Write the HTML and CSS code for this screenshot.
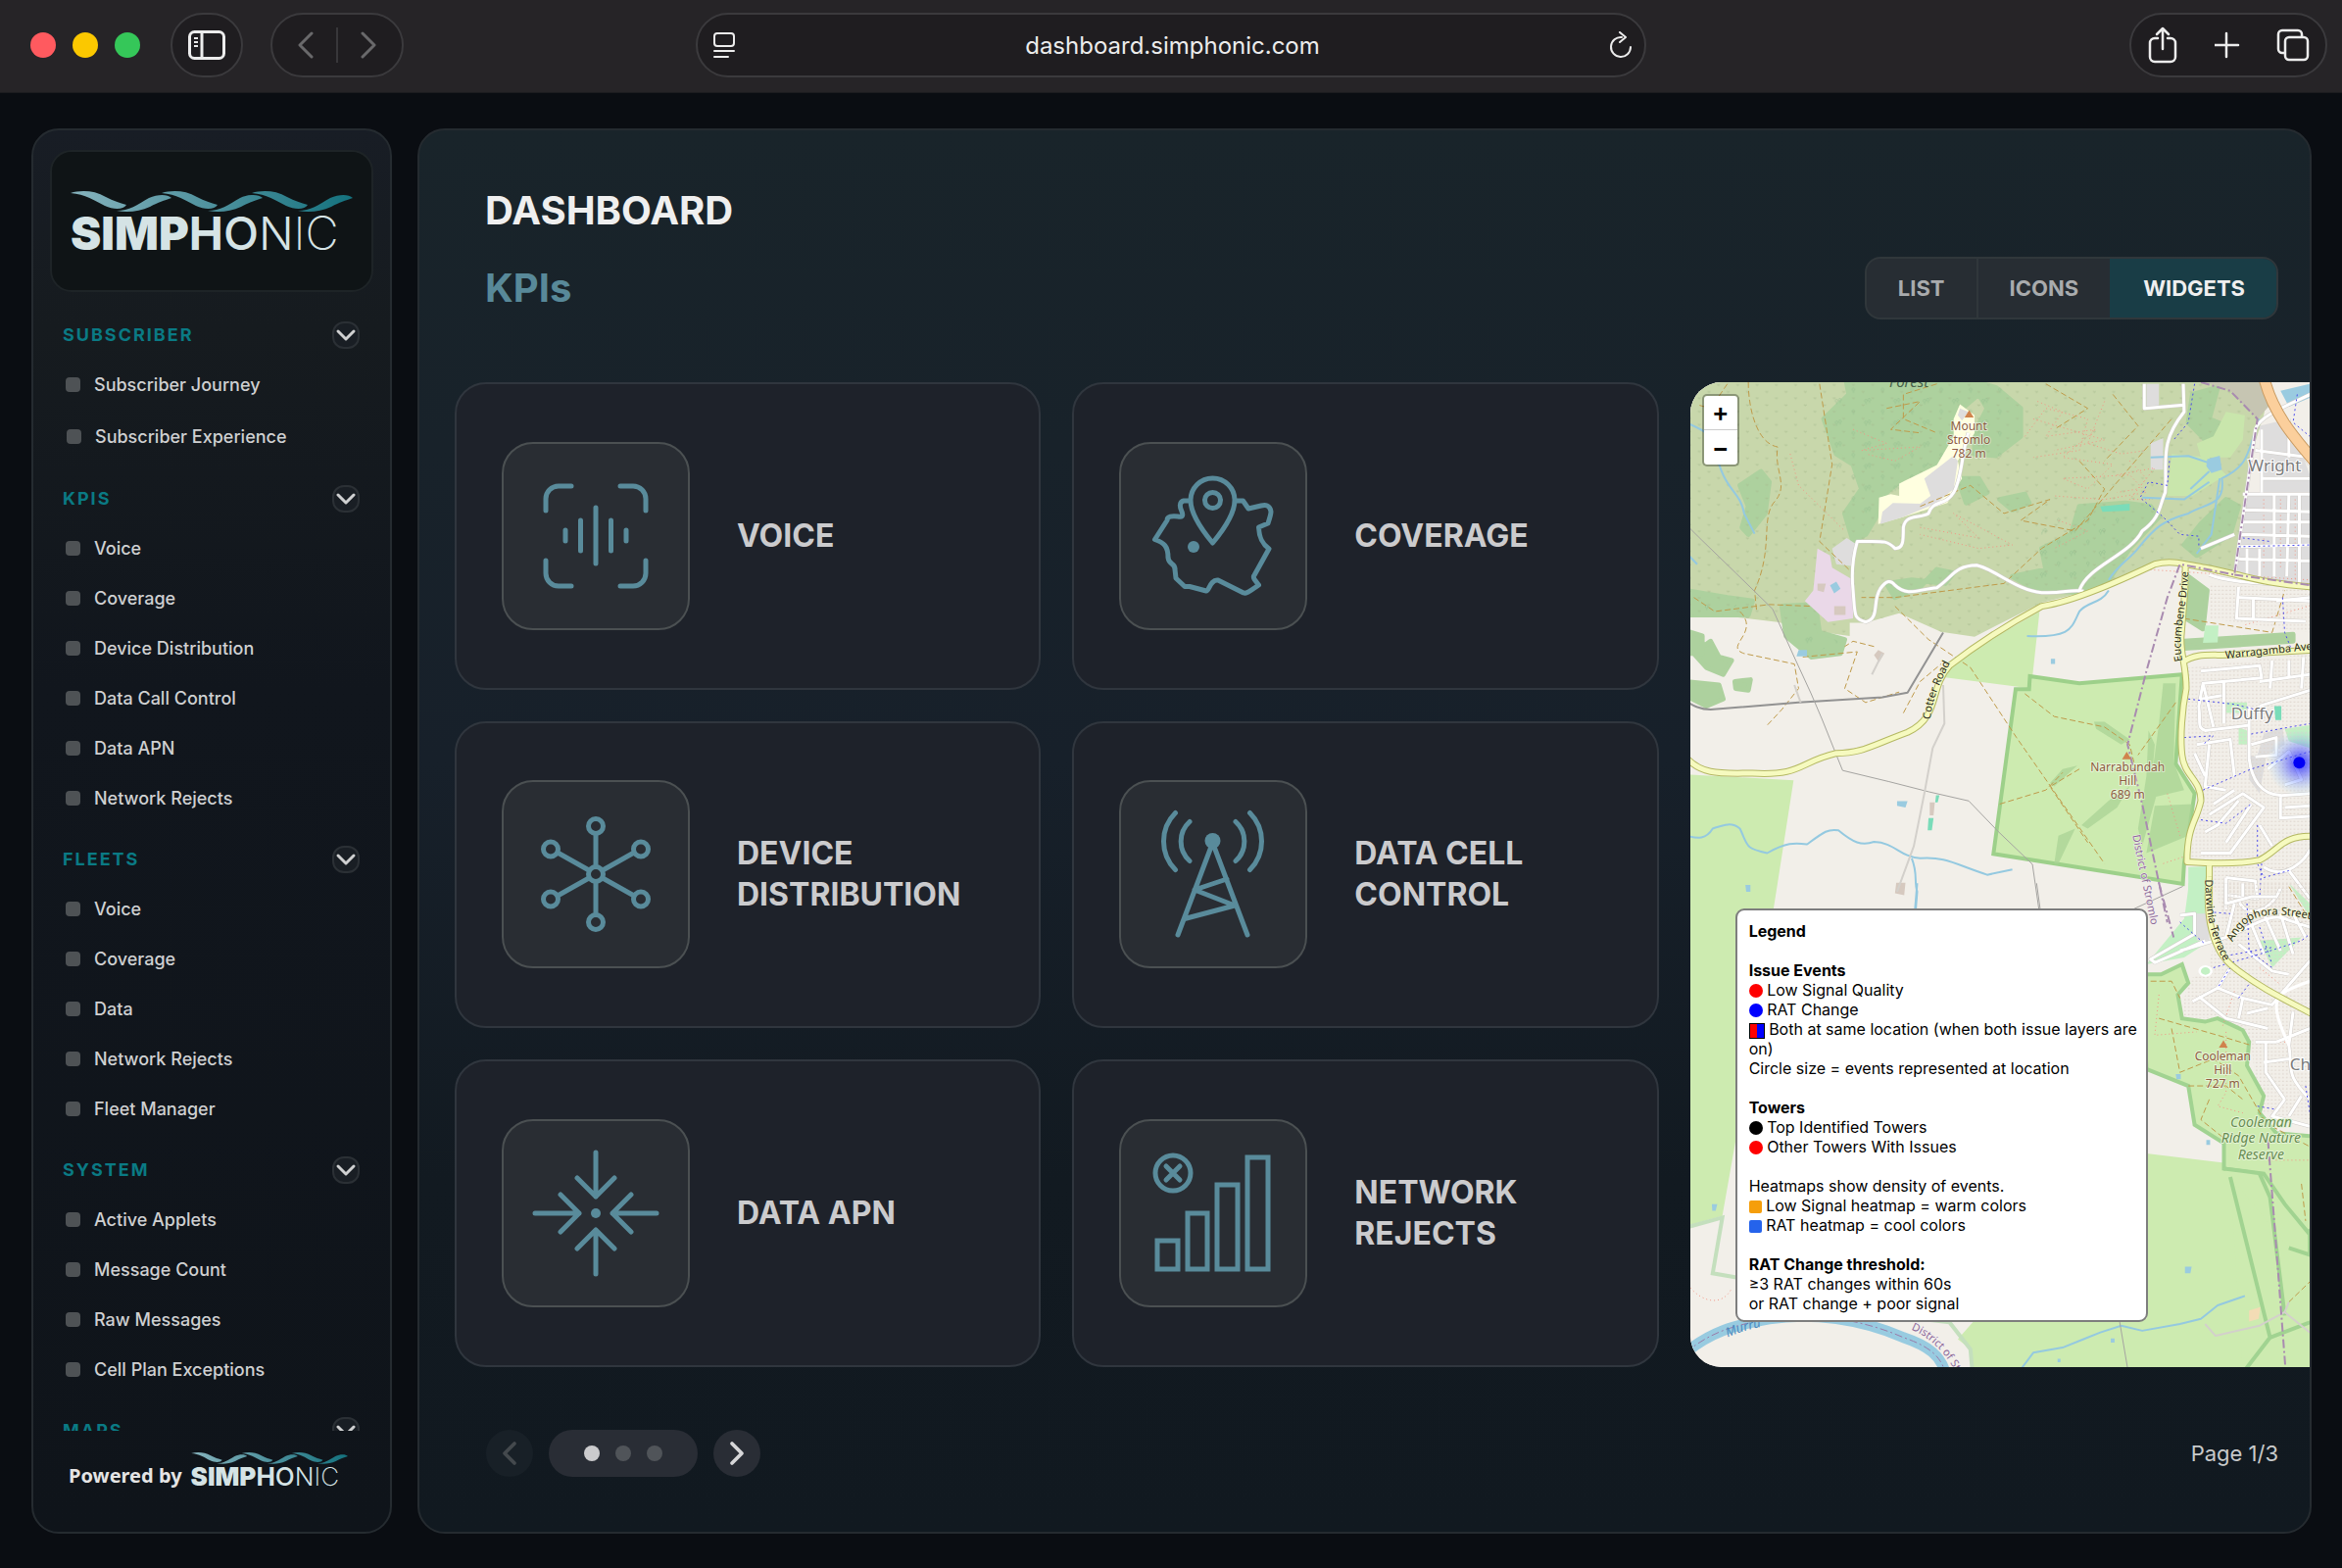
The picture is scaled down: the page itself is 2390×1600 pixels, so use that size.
FILE: index.html
```html
<!DOCTYPE html>
<html lang="en">
<head>
    <meta charset="UTF-8">
    <meta name="viewport" content="width=device-width, initial-scale=1.0">
    <title>Simphonic Dashboard</title>
    <link rel="stylesheet" href="styles.css">
</head>
<body>
    <!-- Shared symbols -->
    <svg class="defs" aria-hidden="true">
        <defs>
            <linearGradient id="wave-fill" gradientUnits="userSpaceOnUse" x1="0" y1="0" x2="288" y2="0">
                <stop offset="0" stop-color="#86b3bd"/>
                <stop offset="0.5" stop-color="#4f929e"/>
                <stop offset="1" stop-color="#14727e"/>
            </linearGradient>
            <symbol id="waves" viewBox="0 0 288 22">
                <g fill="url(#wave-fill)">
                    <path d="M0 2C10-1 24-1 36 6C44 10 50 12 57 14C54 19 44 19 35 15C25 10 15 3 0 2Z"/>
                    <path d="M47 20C58 22 70 21 81 16C90 11 95 10 103 7C99 3 89 3 80 7C68 14 60 20 47 20Z"/>
                    <path d="M93 2C103-1 117-1 129 6C137 10 143 12 150 14C147 19 137 19 128 15C118 10 108 3 93 2Z"/>
                    <path d="M140 20C151 22 163 21 174 16C183 11 188 10 196 7C192 3 182 3 173 7C161 14 153 20 140 20Z"/>
                    <path d="M185 2C195-1 209-1 221 6C229 10 235 12 242 14C239 19 229 19 220 15C210 10 200 3 185 2Z"/>
                    <path d="M232 20C243 22 255 21 266 16C275 11 280 10 288 7C284 3 274 3 265 7C253 14 245 20 232 20Z"/>
                </g>
            </symbol>
            <symbol id="chevron" viewBox="0 0 24 24">
                <path d="M4 8l8 8 8-8" fill="none" stroke="currentColor" stroke-width="3" stroke-linecap="round" stroke-linejoin="round"/>
            </symbol>
        </defs>
    </svg>

    <header class="browser-bar">
        <div class="bar-left">
            <span class="light red"></span>
            <span class="light yellow"></span>
            <span class="light green"></span>
            <button class="pill sidebar-btn" aria-label="Toggle sidebar">
                <svg width="38" height="30" viewBox="0 0 38 30" fill="none" stroke="currentColor" stroke-width="3">
                    <rect x="1.5" y="1.5" width="35" height="27" rx="5"/>
                    <path d="M14 2v26"/>
                    <path d="M6 8h4M6 12h4M6 16h4" stroke-width="2"/>
                </svg>
            </button>
            <div class="pill nav-pill">
                <button aria-label="Back">
                    <svg width="18" height="28" viewBox="0 0 18 28"><path d="M14 2L2 14l12 12"/></svg>
                </button>
                <span class="nav-divider"></span>
                <button aria-label="Forward">
                    <svg width="18" height="28" viewBox="0 0 18 28"><path d="M4 2l12 12L4 26"/></svg>
                </button>
            </div>
        </div>
        <div class="pill url-pill">
            <svg width="24" height="28" viewBox="0 0 24 28" fill="none" stroke="currentColor" stroke-width="2" stroke-linecap="round">
                <rect x="2" y="2" width="20" height="13" rx="3"/>
                <path d="M2 20h20M2 26h14"/>
            </svg>
            <input class="url" type="text" value="dashboard.simphonic.com" aria-label="Address">
            <button aria-label="Reload">
                <svg width="24" height="28" viewBox="0 0 24 28" fill="none" stroke="currentColor" stroke-width="2" stroke-linecap="round" stroke-linejoin="round">
                    <path d="M13 6A10 10 0 1 0 22 16"/>
                    <path d="M11 1l6 5-6 5"/>
                </svg>
            </button>
        </div>
        <div class="pill actions-pill">
            <button aria-label="Share">
                <svg width="34" height="38" viewBox="0 0 34 38" fill="none" stroke="currentColor" stroke-width="2.5" stroke-linecap="round" stroke-linejoin="round">
                    <path d="M11 12H8a5 5 0 0 0-5 5v14a5 5 0 0 0 5 5h16a5 5 0 0 0 5-5V17a5 5 0 0 0-5-5h-3"/>
                    <path d="M16 23V3M10 8l6-6 6 6"/>
                </svg>
            </button>
            <button aria-label="New tab">
                <svg width="28" height="28" viewBox="0 0 28 28" fill="none" stroke="currentColor" stroke-width="2.5" stroke-linecap="round">
                    <path d="M12 2v24M0 14h24"/>
                </svg>
            </button>
            <button aria-label="Show tabs">
                <svg width="34" height="34" viewBox="0 0 34 34" fill="none" stroke="currentColor" stroke-width="2.5">
                    <path d="M9 25H6a4 4 0 0 1-4-4V6a4 4 0 0 1 4-4h16a4 4 0 0 1 4 4v3"/>
                    <rect x="9" y="9" width="23" height="23" rx="4"/>
                </svg>
            </button>
        </div>
    </header>

    <div class="app">
        <aside class="sidebar">
            <div class="logo-card">
                <div class="logo">
                    <svg class="logo-waves" viewBox="0 0 288 22"><use href="#waves"/></svg>
                    <div class="wordmark"><span class="w900">SIMP</span><span class="w700">H</span><span class="w500">O</span><span class="w300">N</span><span class="w200">IC</span></div>
                </div>
            </div>

            <nav class="menu">
                <section>
                    <h2>SUBSCRIBER <button class="collapse" aria-label="Collapse Subscriber"><svg><use href="#chevron"/></svg></button></h2>
                    <a href="#">Subscriber Journey</a>
                    <a class="hovered" href="#">Subscriber Experience</a>
                </section>
                <section>
                    <h2>KPIS <button class="collapse" aria-label="Collapse KPIs"><svg><use href="#chevron"/></svg></button></h2>
                    <a href="#">Voice</a>
                    <a href="#">Coverage</a>
                    <a href="#">Device Distribution</a>
                    <a href="#">Data Call Control</a>
                    <a href="#">Data APN</a>
                    <a href="#">Network Rejects</a>
                </section>
                <section>
                    <h2>FLEETS <button class="collapse" aria-label="Collapse Fleets"><svg><use href="#chevron"/></svg></button></h2>
                    <a href="#">Voice</a>
                    <a href="#">Coverage</a>
                    <a href="#">Data</a>
                    <a href="#">Network Rejects</a>
                    <a href="#">Fleet Manager</a>
                </section>
                <section>
                    <h2>SYSTEM <button class="collapse" aria-label="Collapse System"><svg><use href="#chevron"/></svg></button></h2>
                    <a href="#">Active Applets</a>
                    <a href="#">Message Count</a>
                    <a href="#">Raw Messages</a>
                    <a href="#">Cell Plan Exceptions</a>
                </section>
                <section>
                    <h2>MAPS <button class="collapse" aria-label="Collapse Maps"><svg><use href="#chevron"/></svg></button></h2>
                </section>
            </nav>

            <footer class="powered">
                <span>Powered by</span>
                <div class="logo small">
                    <svg class="logo-waves" viewBox="0 0 288 22"><use href="#waves"/></svg>
                    <div class="wordmark"><span class="w900">SIMP</span><span class="w700">H</span><span class="w500">O</span><span class="w300">N</span><span class="w200">IC</span></div>
                </div>
            </footer>
        </aside>

        <main class="panel">
            <h1>DASHBOARD</h1>
            <div class="panel-head">
                <p class="subtitle">KPIs</p>
                <div class="view-switch">
                    <button>LIST</button>
                    <button>ICONS</button>
                    <button class="active">WIDGETS</button>
                </div>
            </div>

            <div class="widgets">
                <a class="card" href="#">
                    <span class="tile">
                        <svg viewBox="2 2 188 188">
                            <path d="M45 70V58a13 13 0 0 1 13-13H71M121 45h13a13 13 0 0 1 13 13v12M147 121v13a13 13 0 0 1-13 13h-13M71 147H58a13 13 0 0 1-13-13v-13"/>
                            <path d="M65 90v11M80.5 80v31M96 67v57M111.5 80v31M127 90v11"/>
                        </svg>
                    </span>
                    <span class="card-title">VOICE</span>
                </a>
                <a class="card" href="#">
                    <span class="tile">
                        <svg viewBox="2 2 188 188">
                            <path d="M95.5 103C88 94 73 74 73 59.5a22.5 22.5 0 0 1 45 0C118 74 103 94 95.5 103Z"/>
                            <circle cx="95.5" cy="59.5" r="8"/>
                            <circle class="solid" cx="76" cy="107" r="6"/>
                            <path d="M71 60H66C61 61 62 67 64 71C66 76 64 77 60 76C54 75 49 76 49 80L36.5 99.500C46 103 50 106 50 118C51 126 57 123 57 130L58 139L67 147.500H72L89 152C92 152 93 140 101 141L127 154C130 155 132 153 142.500 146L138 140C137 138 137 137 138 136L153 109C146 104 143 98 142.500 87L152 83C153 80 155 74 155 71C154 64 149 64 145 65L132 68L126.500 60H120"/>
                        </svg>
                    </span>
                    <span class="card-title">COVERAGE</span>
                </a>
                <a class="card" href="#">
                    <span class="tile">
                        <svg viewBox="2 2 188 188">
                            <path d="M96 55v33M96 104v32M89 92L57 74M103 92l32-18M89 100l-32 18M103 100l32 18"/>
                            <circle cx="96" cy="96" r="7.5"/>
                            <circle cx="96" cy="47" r="7.5"/>
                            <circle cx="96" cy="145" r="7.5"/>
                            <circle cx="50" cy="70.5" r="7.5"/>
                            <circle cx="142" cy="70.5" r="7.5"/>
                            <circle cx="50" cy="121.5" r="7.5"/>
                            <circle cx="142" cy="121.5" r="7.5"/>
                        </svg>
                    </span>
                    <span class="card-title">DEVICE DISTRIBUTION</span>
                </a>
                <a class="card" href="#">
                    <span class="tile">
                        <svg viewBox="2 2 188 188">
                            <circle class="solid" cx="95.5" cy="62" r="8"/>
                            <path d="M95.5 64L60 158M95.5 64L131 158M110 101L77 112l41 16L67 141.5"/>
                            <path d="M72 42.5a27 27 0 0 0 0 40M57.5 33.5a41 41 0 0 0 0 58M119 42.5a27 27 0 0 1 0 40M133.5 33.5a41 41 0 0 1 0 58"/>
                        </svg>
                    </span>
                    <span class="card-title">DATA CELL CONTROL</span>
                </a>
                <a class="card" href="#">
                    <span class="tile">
                        <svg viewBox="2 2 188 188">
                            <circle class="solid" cx="96" cy="96" r="5"/>
                            <path d="M96 34v45M77 60l19 19 19-19M96 158v-45M77 132l19-19 19 19M34 96h45M60 77l19 19-19 19M158 96h-45M132 77l-19 19 19 19"/>
                        </svg>
                    </span>
                    <span class="card-title">DATA APN</span>
                </a>
                <a class="card" href="#">
                    <span class="tile">
                        <svg viewBox="2 2 188 188">
                            <path class="square" d="M39 124h21v29H39zM70 96h20v57H70zM100 67h21v86h-21zM131 39h21v114h-21z"/>
                            <circle cx="55" cy="55" r="18"/>
                            <path d="M48 48l14 14M62 48L48 62"/>
                        </svg>
                    </span>
                    <span class="card-title">NETWORK REJECTS</span>
                </a>

                <div class="map">
                    <svg class="map-tiles" viewBox="0 0 632 1006" preserveAspectRatio="xMinYMin slice" aria-label="Map">
                        <defs>
                            <pattern id="tufts" width="46" height="38" patternUnits="userSpaceOnUse">
                                <path d="M8 12l2 4 2-4M6 14l4 3 4-3M31 30l2 4 2-4M29 32l4 3 4-3" fill="none" stroke="#a3b98a" stroke-width="1"/>
                            </pattern>
                            <pattern id="trees" width="70" height="62" patternUnits="userSpaceOnUse">
                                <path d="M10 20a3 4 0 1 1 1 0v6M18 17a3 4 0 1 1 1 0v6M50 50a3 4 0 1 1 1 0v6" fill="none" stroke="#85b386" stroke-width="1"/>
                            </pattern>
                            <pattern id="plots" width="9" height="11" patternUnits="userSpaceOnUse">
                                <path d="M2 2h4v3h-4z" fill="#dcd3ca"/>
                            </pattern>
                            <radialGradient id="heat">
                                <stop offset="0" stop-color="#1b1bff" stop-opacity="0.85"/>
                                <stop offset="0.4" stop-color="#4a55ff" stop-opacity="0.5"/>
                                <stop offset="1" stop-color="#7fd0ff" stop-opacity="0"/>
                            </radialGradient>
                            <path id="cotter" d="M0 1095C40 1150 90 1142 160 1142C280 1150 270 1110 360 1085C420 1085 440 1065 530 1025C610 980 580 900 630 835C700 770 780 710 850 665C930 650 1040 590 1120 545C1160 532 1190 545 1240 555C1330 575 1370 600 1500 610"/>
                            <path id="eucumbene" d="M1193 545L1192 620L1183 750C1180 800 1195 830 1195 900C1185 960 1180 1040 1185 1090C1190 1150 1230 1160 1230 1220C1220 1280 1197 1290 1197 1395C1260 1400 1330 1400 1370 1390C1420 1360 1420 1320 1500 1322M1187 825C1220 795 1260 808 1300 803L1500 790M1250 1400L1250 1568"/>
                            <path id="darwinia" d="M1250 -20C1240 90 1255 200 1310 250C1370 310 1440 350 1500 390"/>
                            <path id="stromlo-road" d="M675 170C660 220 660 300 640 340C620 380 590 360 580 400C560 415 525 400 520 440C520 480 520 500 500 500C480 475 470 480 410 480C400 520 395 560 400 620C405 690 400 700 430 710C465 700 445 650 465 615C480 590 490 590 500 605C530 640 560 615 600 612C640 580 640 550 695 548C740 560 790 620 850 626C900 630 920 615 950 622"/>
                            <path id="streets-north" d="M1500 55C1440 90 1370 120 1360 160L1310 580M1330 345H1490M1335 390L1490 395M1330 425H1490M1325 460L1490 465M1325 495L1490 490M1320 530L1490 535M1375 160V340M1405 345V580M1440 345L1435 580M1340 500V580M1370 500V580M1465 345V600M1375 300H1490M1360 220L1490 240M1420 140L1490 260M1440 130V240M1250 575C1300 600 1400 600 1490 610M1320 610L1315 700L1480 708M1320 640L1490 650M1355 640V700M1188 30L1190 110C1130 200 1150 250 1145 340C1130 380 1135 410 1090 450C1060 520 960 550 940 620M1095 30V100L1190 90M1230 500L1310 460"/>
                            <path id="streets-duffy" d="M1230 850L1370 835L1375 870L1235 885L1225 950C1230 1000 1220 1010 1240 1020L1345 1005M1235 885L1260 1010M1285 880V1000M1230 930L1280 920M1370 880L1490 860M1400 820L1395 900M1440 820V870M1370 950L1490 905M1345 950L1345 1100C1350 1150 1370 1210 1430 1205L1490 1200M1220 1060L1300 1045L1310 1150M1215 1085L1240 1150M1250 1060L1240 1180L1290 1190M1260 1230L1310 1190M1250 1260L1330 1200L1380 1240L1300 1370L1230 1370M1240 1310L1270 1290L1320 1220M1290 1340L1350 1230M1420 1210V1270L1490 1265M1430 1240L1490 1235M1370 1290L1400 1350M1350 1060L1410 1040L1410 1090L1360 1095M1390 1130L1440 1080L1470 1160L1430 1175M1290 1440L1360 1450L1365 1500L1290 1490M1290 1440V1530M1380 1410C1430 1450 1480 1390 1490 1360M1320 1500C1330 1560 1400 1540 1420 1470M1440 1420L1490 1500M1475 810L1470 900M1410 650L1490 640"/>
                            <path id="streets-chapman" d="M1290 0V60L1350 40L1410 40M1310 60L1290 160L1180 200M1330 40V0M1290 160C1350 130 1400 80 1440 110L1490 130M1320 180L1400 260L1440 270M1350 120L1380 210M1380 90L1420 200M1420 90L1450 210M1180 95L1215 90L1215 150L1110 225L1120 235L1240 170M1300 250L1270 310L1210 350M1225 335L1290 400L1390 430M1270 310L1330 340L1320 400M1330 340L1400 360L1420 330M1390 370L1340 385M1450 380L1440 480C1450 560 1430 560 1490 640M1360 470H1410M1385 470V560L1430 640M1410 470L1490 430M1440 520L1380 530M1430 640L1400 690L1490 720M1470 630L1440 690M1490 230L1420 330M1450 90L1480 160"/>
                        </defs>

                        <rect class="ground" width="632" height="1006"/>

                        <!-- North half -->
                        <g class="geo" transform="translate(-5 -9) scale(0.4274 0.3571)">
                            <path class="scrub" d="M0 0H1400L1380 120L1345 250L1310 580L1180 540L1120 545L950 625L850 655L690 752L610 738L510 685L430 712L392 712V750L300 735L220 710L0 680Z"/>
                            <path class="wood" d="M380 0L390 60L330 130L360 230L400 260L420 330L380 400L400 480L430 460L460 400L470 350L520 300L600 260L640 190L660 100L700 60L720 100L690 170L690 230L740 235L800 180L800 100L740 40L620 0ZM180 280L200 310L190 400L150 460L135 440L150 380L130 320ZM940 380L1050 370L1110 380L1130 410L1060 500L1010 590L930 625L840 620L780 580L860 560L850 500L920 460ZM480 600L540 590L620 600L640 570L600 560L560 610L500 640ZM230 665L310 660L320 740L380 760L370 800L300 810L240 750ZM0 620L100 640L160 650L150 690L0 690ZM1290 360L1320 380L1300 460L1220 520L1190 490L1230 430ZM1210 60L1270 40L1250 130L1290 150L1240 190L1200 140ZM750 360L810 345L820 370L780 390ZM650 300L700 300L720 340L670 370ZM0 735L40 750L40 800L0 800ZM60 765L80 810L110 820L90 860L50 840L20 800ZM0 880L80 890L90 930L50 950L0 920ZM118 880L155 875L150 905L120 900ZM1200 580L1245 620L1235 730L1195 700ZM1190 765L1450 745L1450 765L1190 785Z"/>
                            <path class="tufts" d="M0 0H1400L1380 120L1345 250L1310 580L1180 540L1120 545L950 625L850 655L690 752L610 738L510 685L430 712L392 712V750L300 735L220 710L0 680Z"/>
                            <path class="trees" d="M350 30H760V240H600L440 400L400 400L340 200ZM860 400L1060 400L1050 500L930 600L820 600ZM0 640L130 650L100 690H0ZM240 670L370 770L300 800Z"/>
                            <path class="park" d="M1290 110L1335 120L1330 190L1300 240L1230 240L1220 200L1260 180ZM1160 230L1250 240L1290 290L1210 350L1150 350Z"/>
                            <path class="golf" d="M1430 345H1480V370H1435ZM1240 720L1272 720L1270 768L1235 770ZM1330 465H1395V488H1330ZM1290 940H1340V970H1290ZM1320 1010L1340 1020V1060H1320ZM1430 1015L1490 1005V1070L1440 1050ZM1200 1410L1245 1408L1240 1480L1190 1560L1200 1470Z"/>
                            <path class="grass" d="M845 680L825 900L620 868L640 830L750 745ZM0 1145L258 1162L218 1470L205 1568H0Z"/>
                            <path class="village" d="M655 88L690 120L690 170L650 250L660 300L625 370L520 410L460 430L462 355L490 345L510 350L510 315L600 262L640 180L640 130Z"/>
                            <path class="built" d="M655 100L675 110L660 135L650 120ZM470 395L495 370L560 372L585 350L570 300L640 235L650 250L640 330L600 370L520 410L465 430ZM350 500L385 470L410 490L395 550L360 545ZM1110 200L1140 185V275H1110ZM1100 30H1130V95H1100ZM1370 150L1440 130L1490 290V340H1375ZM1340 350L1490 350V600L1400 590L1310 575ZM1345 1090L1385 1100L1370 1200L1345 1160ZM1380 1030L1425 1010L1430 1060L1360 1110Z"/>
                            <path class="works" d="M315 500L345 520L350 555L400 590L400 700L340 710L285 650L305 620ZM1140 1295H1165V1330H1140Z"/>
                            <path class="suburb" d="M1250 600L1490 620V740L1250 700ZM1200 840L1490 800V1568H1290L1240 1400L1200 1390L1230 1250L1200 1130Z"/>
                            <path class="retail" d="M1240 0H1380L1395 90L1365 130L1300 50L1240 25Z"/>

                            <path class="reserve" d="M822 865L940 885L1185 860L1170 1115L1215 1200L1190 1400L1187 1458L735 1372L788 902L820 902Z"/>
                            <path class="reserve-wood" d="M1140 885H1170L1165 1110L1190 1190L1120 1210L1110 1180L1130 1000ZM975 995L1000 995L1060 1045L1040 1060L980 1015ZM1105 1020L1120 1060L1115 1130L1130 1180L1090 1350L1080 1300L1100 1150ZM1210 1230L1200 1320L1100 1370L1120 1235ZM1060 1180L1030 1240L960 1300L945 1290L1010 1220ZM930 1300L890 1400L880 1400L890 1320ZM935 1120L880 1180L870 1170L900 1130Z"/>

                            <path class="track" d="M150 25C150 100 170 200 220 210C210 280 250 320 210 370C180 420 210 500 165 620L170 680M320 30L350 260L320 480L390 560M480 100L560 80L490 160L560 170M560 380L680 320L760 400L870 360L800 420L930 450L1160 130M940 250L1000 330L960 420L850 500L760 600L500 640L420 640M600 30L520 60L520 130L600 170M860 30L960 100L880 160M1020 60L1080 150L1000 250M100 30L60 100L30 90M20 640L70 680L200 660L300 665M130 680C180 740 90 780 140 800L260 830L270 900L230 960L195 1005M280 810L410 795L380 900L430 940L510 910M450 780L400 765L380 780M500 665L580 760L680 840L790 1040L1000 1400M520 970L560 880L610 830M810 915L880 980L1000 1010L1060 1060L1070 1110M1170 940L1080 1090M750 1230L860 1190L900 1140M940 1130L870 1180L960 1340M1190 700L1400 740L1430 620"/>
                            <path class="red-track" d="M400 160L480 200L420 220L560 210L500 250L430 230M840 80L900 110L860 180L980 160L900 240L1020 260L960 330L900 300L1060 290L1100 340L1000 360L880 350M830 130L1000 190L880 220M810 180L860 100L960 130L940 220L830 240M1000 80L960 200L1040 230L1100 220M560 440L700 470L640 400L780 490L700 500L560 460M1060 250L1100 300L1060 360L1110 360M1030 290L1120 270L1080 330L1030 340M890 420L960 450L880 500M250 230L270 320L380 450M1100 560L1490 590M1340 350L1320 480M1380 360V560M1420 360V560M1455 360V590M1500 660L1330 720M1150 1200L1180 1320M1140 1400L1190 1380"/>
                            <path class="water-line" d="M0 140C40 160 60 170 70 210C90 340 130 330 140 400L165 458M0 510L28 545M1370 130C1340 220 1350 260 1280 300C1290 380 1240 370 1200 400C1140 420 1120 440 1080 500C1060 530 1030 550 1010 590M1110 240L1200 236L1260 260M1090 355L1190 360L1250 310M1275 300L1255 460L1220 515M1250 280L1205 330M1010 620C990 660 960 650 940 680C920 730 920 755 815 750M0 1320C30 1330 50 1330 65 1300C90 1290 110 1280 130 1300C150 1350 140 1355 195 1370C240 1340 260 1340 290 1345C330 1310 340 1300 365 1305C400 1340 420 1350 450 1338C500 1340 510 1380 560 1385C620 1380 640 1400 720 1432L780 1417M540 1385C555 1430 545 1450 553 1480L547 1568"/>
                            <path class="water" d="M1245 245L1275 235L1280 275L1255 285L1243 265ZM270 790H290V808H265ZM345 605L360 595L370 615L355 628ZM505 1222L530 1222L525 1240L505 1235ZM872 815H882V830H872ZM145 1462L158 1465L152 1482H142ZM1420 50L1490 30V70L1440 95Z"/>
                            <path class="pool" d="M598 1205L606 1205L602 1225H596ZM580 1270H592L588 1305H578ZM1405 950L1422 950V990H1408ZM990 380L1060 372V392L995 395Z"/>
                            <path class="building" d="M583 1225H595L592 1262H583ZM503 1455L525 1455L522 1490L500 1485ZM460 790L475 800L462 825L450 805ZM355 665H382V690H355ZM315 600L335 600L330 625L315 620Z"/>

                            <path class="rail" d="M0 935C20 950 35 960 60 960L270 940L470 925L530 912L615 740"/>
                            <path class="power" d="M0 430L38 475L120 570L208 673L258 806L300 915L326 988L375 1134L486 1166L581 1195L676 1221L746 1308L828 1402L848 1568M1187 1465L1000 1568"/>
                            <path class="lane" d="M615 890L618 1000L590 1070L570 1200L545 1350L505 1480M260 890L275 940M445 860L470 800"/>
                            <g class="minor-casing"><use href="#stromlo-road"/><use href="#streets-north"/><use href="#streets-duffy"/></g>
                            <g class="minor-fill"><use href="#stromlo-road"/><use href="#streets-north"/><use href="#streets-duffy"/></g>
                            <path class="cycle" d="M1215 30L1200 140L1165 190M1155 250L1150 320L1105 310L1085 355L1140 410L1180 460L1225 465L1225 500M1425 640L1430 740L1450 800M1200 930L1310 945L1360 960M1190 1040L1260 1035L1235 1060M1235 1190L1350 1130L1490 1080M1350 1030L1490 1000M1230 1275L1290 1285L1350 1230M1365 1290V1400L1380 1440L1440 1420M1330 470L1395 480M1320 495L1490 490M1460 60L1450 140L1490 180M1375 1400L1370 1500"/>
                            <g class="main-casing"><use href="#cotter"/><use href="#eucumbene"/></g>
                            <g class="main-fill"><use href="#cotter"/><use href="#eucumbene"/></g>
                            <path class="trunk-casing" d="M1380 10C1400 110 1450 180 1500 250"/>
                            <path class="trunk-fill" d="M1380 10C1400 110 1450 180 1500 250"/>
                            <path class="boundary" d="M1230 25L1300 50L1365 130L1340 330L1310 575L1180 545L1150 640L1100 850L1055 1060L1090 1230L1150 1568M1310 575L1490 605"/>
                            <path class="peak" d="M677 105L688 126H666ZM1053 1080L1064 1102H1042Z"/>
                        </g>

                        <!-- South half -->
                        <g class="geo" transform="translate(-5 511) scale(0.4274 0.3444)">
                            <path class="grass" d="M0 0H218L205 60L120 760L88 985L0 1015ZM1100 800L1500 860V1450H690L680 1380L650 1350L700 1280L1100 1290Z"/>
                            <path class="golf" d="M1200 0H1240L1240 180L1190 220L1100 240L1200 90ZM1370 170L1470 160L1400 250ZM1440 0L1490 60V100Z"/>
                            <path class="built" d="M1215 90H1250V170H1220Z"/>
                            <path class="suburb" d="M1290 0H1490V700L1370 680L1350 480L1330 430L1270 400L1180 400L1200 290L1250 240Z"/>
                            <path class="hill" d="M1090 270H1135L1185 240L1200 295L1175 330L1185 400L1240 410L1270 400L1330 435L1345 470L1340 540L1380 630L1370 680L1410 740L1500 750V1020L1465 1050L1370 860L1285 845L1285 770L1215 715L1200 600L1100 550Z"/>
                            <path class="hill" d="M1285 845L1380 860L1430 950L1490 1040V1100L1440 1080M1300 870L1395 1345L1330 1450M1395 1345L1490 1300M1370 860L1395 930L1430 1280"/>
                            <path class="pale-edge" d="M0 1020L88 990L65 1155L125 1168M560 1290L630 1300L680 1380L685 1450"/>
                            <path class="river" d="M0 1390C60 1330 110 1310 200 1290C300 1270 420 1290 520 1345C580 1370 610 1400 620 1450"/>
                            <path class="river-line" d="M0 1390C60 1330 110 1310 200 1290C300 1270 420 1290 520 1345C580 1370 610 1400 620 1450"/>
                            <path class="water-line" d="M553 0L547 90M800 1440L830 1390L900 1375L950 1350L990 1330L1040 1310L1090 1325L1180 1305L1230 1290L1270 1250L1335 1222"/>
                            <path class="water" d="M1192 1135L1208 1135L1205 1155H1192ZM63 950H76L72 970H64ZM143 5H155V25H145ZM1170 565H1182V580H1172ZM1243 760H1252V775H1243ZM1015 1348H1024V1360H1015ZM888 1408H895V1418H888Z"/>
                            <path class="dirt" d="M1345 1265L1372 1255L1368 1290L1345 1298Z"/>
                            <path class="track" d="M1110 290L1160 290L1180 340M1130 400L1270 450L1350 480M1160 430L1180 560L1260 520L1320 570L1380 700M1200 600L1290 600L1330 640M1250 640L1230 700L1290 760M1470 890L1480 1000M1440 1240L1490 1180M1400 720L1490 780M1440 10L1480 90"/>
                            <path class="red-track" d="M1290 440L1290 620L1270 660L1330 680M1130 330L1120 450L1220 440M1390 820L1490 820M1310 320L1280 430M0 1180C40 1250 90 1250 110 1200M1370 250L1420 300M1410 470H1440"/>
                            <path class="power" d="M838 0L848 90M1035 1290L1057 1450"/>
                            <path class="lane" d="M1240 1305L1265 1340L1370 1310L1430 1270L1490 1330M1430 1270L1440 1240"/>
                            <g class="minor-casing"><use href="#streets-chapman"/></g>
                            <g class="minor-fill"><use href="#streets-chapman"/></g>
                            <path class="minor-fill" d="M1490 290C1400 330 1390 340 1440 480"/>
                            <circle class="circus" cx="1241" cy="260" r="14"/>
                            <path class="cycle" d="M1260 250L1370 210L1470 170L1490 150M1290 215L1400 190M1340 60L1345 200L1400 250M1370 130L1400 240M1180 115L1240 180M1250 85L1300 90M1300 250L1270 310M1480 600L1490 680M1365 660L1410 670M1320 340L1350 290"/>
                            <g class="main-casing"><use href="#darwinia"/></g>
                            <g class="main-fill"><use href="#darwinia"/></g>
                            <path class="boundary" d="M1130 0L1165 160M1390 760L1405 1000L1432 1440"/>
                            <path class="peak" d="M1284 465L1294 487H1273Z"/>
                        </g>

                        <!-- RAT change event -->
                        <circle cx="622" cy="388" r="34" fill="url(#heat)"/>
                        <circle cx="621" cy="388" r="6" fill="#0000f5"/>

                        <g class="labels">
                            <text class="forest" x="223" y="5">Forest</text>
                            <g class="peak-label">
                                <text x="284" y="49">Mount</text>
                                <text x="284" y="63">Stromlo</text>
                                <text x="284" y="77">782 m</text>
                                <text x="446" y="397">Narrabundah</text>
                                <text x="446" y="411">Hill</text>
                                <text x="446" y="425">689 m</text>
                                <text x="543" y="692">Cooleman</text>
                                <text x="543" y="706">Hill</text>
                                <text x="543" y="720">727 m</text>
                            </g>
                            <g class="place">
                                <text x="596" y="91">Wright</text>
                                <text x="573" y="344">Duffy</text>
                                <text x="622" y="702">Ch</text>
                            </g>
                            <g class="nature">
                                <text x="582" y="760">Cooleman</text>
                                <text x="582" y="776">Ridge Nature</text>
                                <text x="582" y="793">Reserve</text>
                            </g>
                            <g class="road">
                                <path id="lbl-cotter" d="M245 344C246 325 254 308 264 288"/>
                                <path id="lbl-eucumbene" d="M502 284C496 262 506 232 508 196"/>
                                <path id="lbl-darwinia" d="M525 507C525 538 529 562 544 590"/>
                                <path id="lbl-angophora" d="M553 571C564 550 577 535 634 548"/>
                                <path id="lbl-warragamba" d="M546 282L640 272"/>
                                <text><textPath href="#lbl-cotter">Cotter Road</textPath></text>
                                <text><textPath href="#lbl-eucumbene">Eucumbene Drive</textPath></text>
                                <text><textPath href="#lbl-darwinia">Darwinia Terrace</textPath></text>
                                <text><textPath href="#lbl-angophora">Angophora Street</textPath></text>
                                <text><textPath href="#lbl-warragamba">Warragamba Aven</textPath></text>
                            </g>
                            <g class="district">
                                <path id="lbl-district" d="M451 462C458 500 466 530 473 570"/>
                                <path id="lbl-district-south" d="M225 966C245 974 262 992 272 1012"/>
                                <text><textPath href="#lbl-district">District of Stromlo</textPath></text>
                                <text><textPath href="#lbl-district-south">District of St</textPath></text>
                            </g>
                            <g class="river-label">
                                <path id="lbl-river" d="M38 974C52 968 66 964 90 960"/>
                                <text><textPath href="#lbl-river">Murru</textPath></text>
                            </g>
                        </g>
                    </svg>

                    <div class="zoom-control">
                        <button aria-label="Zoom in">+</button>
                        <button aria-label="Zoom out">&minus;</button>
                    </div>

                    <div class="legend">
                        <strong>Legend</strong><br><br>
                        <strong>Issue Events</strong><br>
                        <i class="key red-dot"></i> Low Signal Quality<br>
                        <i class="key blue-dot"></i> RAT Change<br>
                        <i class="key both"></i> Both at same location (when both issue layers are on)<br>
                        Circle size = events represented at location<br><br>
                        <strong>Towers</strong><br>
                        <i class="key black-dot"></i> Top Identified Towers<br>
                        <i class="key red-dot"></i> Other Towers With Issues<br><br>
                        Heatmaps show density of events.<br>
                        <i class="key warm"></i> Low Signal heatmap = warm colors<br>
                        <i class="key cool"></i> RAT heatmap = cool colors<br><br>
                        <strong>RAT Change threshold:</strong><br>
                        &ge;3 RAT changes within 60s<br>
                        or RAT change + poor signal
                    </div>
                </div>
            </div>

            <div class="pager">
                <button class="round prev" aria-label="Previous page" disabled><svg><use href="#chevron"/></svg></button>
                <div class="dots">
                    <button class="dot current" aria-label="Page 1"></button>
                    <button class="dot" aria-label="Page 2"></button>
                    <button class="dot" aria-label="Page 3"></button>
                </div>
                <button class="round next" aria-label="Next page"><svg><use href="#chevron"/></svg></button>
                <span class="page-count">Page 1/3</span>
            </div>
        </main>
    </div>
</body>
</html>
```

FILE: styles.css
```css
* {margin: 0; padding: 0; box-sizing: border-box;}

body {
    display: flex;
    flex-direction: column;
    height: 100vh;
    background: #0a0d12;
    color: #cfd0d1;
    font-family: Inter, "Liberation Sans", sans-serif;
    overflow: hidden;
}
button {
    border: none;
    background: none;
    color: inherit;
    font: inherit;
    cursor: pointer;
}
a {
    color: inherit;
    text-decoration: none;
}
.defs {
    position: absolute;
    width: 0;
    height: 0;
}

/* Browser toolbar */
.browser-bar {
    display: grid;
    grid-template-columns: 1fr minmax(0, 970px) 1fr;
    align-items: center;
    height: 95px;
    padding: 0 15px 2px 31px;
    background: #262427;
    border-bottom: 1px solid #1b1c1f;
    color: #ececec;
}
.bar-left {
    display: flex;
    align-items: center;
}
.light {
    width: 26px;
    height: 26px;
    margin-right: 17px;
    border-radius: 50%;
}
.red {background: #ff5a5f;}
.yellow {background: #fbc800;}
.green {background: #35c759;}
.pill {
    display: flex;
    align-items: center;
    height: 66px;
    border: 2px solid #3b3a3d;
    border-radius: 33px;
    background: #1f1d20;
}
.pill button, .pill svg {
    display: block;
}
.sidebar-btn {
    justify-content: center;
    width: 74px;
    margin: 0 28px 0 14px;
}
.nav-pill {
    justify-content: space-around;
    width: 136px;
    padding: 0 16px;
}
.nav-pill svg {
    fill: none;
    stroke: #69696b;
    stroke-width: 3;
    stroke-linecap: round;
    stroke-linejoin: round;
}
.nav-divider {
    width: 2px;
    height: 36px;
    background: #38373a;
}
.url-pill {
    padding: 0 12px 0 15px;
    margin-left: -8px;
    margin-right: 8px;
}
.url {
    flex: 1;
    min-width: 0;
    border: none;
    background: none;
    color: #ececec;
    font-family: inherit;
    font-size: 24px;
    text-align: center;
}
.actions-pill {
    justify-self: end;
    justify-content: space-between;
    width: 202px;
    padding: 0 16px;
}

/* App shell */
.app {
    display: flex;
    flex: 1;
    gap: 26px;
    min-height: 0;
    padding: 36px 31px 35px 32px;
}
.sidebar, .panel {
    display: flex;
    flex-direction: column;
    border: 2px solid #252b30;
    border-radius: 28px;
    min-height: 0;
}
.sidebar {
    flex: 0 0 368px;
    padding: 20px 17px 0;
    background: linear-gradient(#181d25, #161b1f 14%, #11161d 40%, #0f141a);
}
.logo-card {
    display: flex;
    justify-content: center;
    padding: 40px 0;
    border: 2px solid #1e2427;
    border-radius: 22px;
    background: #0f1416;
}
.logo {
    width: 288px;
    color: #d5e3e5;
}
.logo-waves {
    display: block;
    width: 100%;
}
.wordmark {
    font-size: 47px;
    line-height: 36px;
    padding-top: 3px;
}
.w900 {font-weight: 900;}
.w700 {font-weight: 700;}
.w500 {font-weight: 500;}
.w300 {font-weight: 300;}
.w200 {font-weight: 200;}

.menu {
    flex: 1;
    min-height: 0;
    margin-top: 18px;
    padding: 0 14px 0 13px;
    overflow: hidden;
}
.menu section {
    margin-bottom: 11px;
}
.menu h2 {
    display: flex;
    align-items: center;
    justify-content: space-between;
    height: 51px;
    color: #0a7a84;
    font-size: 18px;
    letter-spacing: 2px;
}
.collapse {
    display: flex;
    align-items: center;
    justify-content: center;
    width: 28px;
    height: 28px;
    border: 2px solid #2b3035;
    border-radius: 12px;
    background: #191e24;
    color: #cfd0d1;
}
.collapse svg {
    width: 24px;
    height: 24px;
    flex: none;
}
.menu a {
    display: flex;
    align-items: center;
    gap: 14px;
    height: 51px;
    padding-left: 3px;
    font-size: 18px;
    font-weight: 500;
}
.menu a::before {
    content: '';
    width: 15px;
    height: 15px;
    border-radius: 4px;
    background: #4e5255;
}
.menu a.hovered {
    height: 54px;
    padding-left: 4px;
}
.powered {
    display: flex;
    align-items: center;
    gap: 9px;
    height: 103px;
    padding: 0 0 24px 19px;
    color: #e4e4e4;
    font-family: "Noto Sans", sans-serif;
    font-size: 20px;
    font-weight: 700;
}
.powered > span {
    padding-top: 11px;
}
.small {
    width: 160px;
    font-family: Inter, sans-serif;
}
.small .wordmark {
    font-size: 26px;
    line-height: 20px;
    padding-top: 2px;
}

/* Main panel */
.panel {
    flex: 1;
    min-width: 0;
    padding: 58px 0 56px 36px;
    background: linear-gradient(#19242a, #17202a 45%, #121a21 75%, #111920);
    overflow: hidden;
}
h1, .subtitle {
    font-size: 40px;
    line-height: 48px;
    font-weight: 700;
}
h1 {
    margin-left: 31px;
    color: #efefef;
}
.subtitle {
    color: #588999;
}
.panel-head {
    display: flex;
    align-items: center;
    justify-content: space-between;
    margin: 23px 32px 64px 31px;
}
.view-switch {
    display: flex;
    height: 64px;
    border: 2px solid #30373b;
    border-radius: 16px;
    background: #272d33;
    overflow: hidden;
}
.view-switch button {
    padding: 0 32px;
    border-left: 2px solid #30373b;
    color: #a9abad;
    font-size: 22px;
    font-weight: 700;
}
.view-switch button:first-child {
    border-left: none;
}
.view-switch .active {
    border-color: #193d46;
    background: #193d46;
    color: #efefef;
}

.widgets {
    display: grid;
    grid-template-columns: 598fr 598fr 632fr;
    grid-template-rows: repeat(3, 1fr);
    gap: 32px;
    flex: 1;
    min-height: 0;
}
.card {
    display: flex;
    align-items: center;
    gap: 48px;
    padding: 0 46px;
    border: 2px solid #30363e;
    border-radius: 32px;
    background: #1e222a;
}
.tile {
    flex: none;
    width: 192px;
    height: 192px;
    border: 2px solid #4b5052;
    border-radius: 32px;
    background: #292d33;
}
.tile svg {
    display: block;
    fill: none;
    stroke: #598b9b;
    stroke-width: 5;
    stroke-linecap: round;
    stroke-linejoin: round;
}
.tile .solid {
    fill: #598b9b;
    stroke: none;
}
.tile .square {
    stroke-linejoin: miter;
}
.card-title {
    color: #cbcbcd;
    font-size: 32px;
    line-height: 42px;
    font-weight: 700;
}

/* Map widget */
.map {
    position: relative;
    grid-column: 3;
    grid-row: 1 / span 3;
    border-radius: 32px 0 0 32px;
    background: #f2efe9;
    overflow: hidden;
}
.map-tiles {
    display: block;
    width: 100%;
    height: 100%;
}
.geo path, .map-tiles defs > path {
    vector-effect: non-scaling-stroke;
}
.ground {fill: #f2efe9;}
.scrub {fill: #c8d7ab;}
.wood {fill: #add19e; stroke: #add19e; stroke-width: 5; stroke-linejoin: round;}
.tufts {fill: url(#tufts);}
.trees {fill: url(#trees);}
.park {fill: #c9e6ac;}
.golf {fill: #c3f0c4;}
.grass {fill: #cdebb0;}
.village {fill: #ffffe0;}
.built {fill: #dedddd;}
.works {fill: #ead8e8;}
.suburb {fill: url(#plots);}
.retail {fill: #c6c5b2;}
.reserve {fill: #cdebb0; stroke: #9dd08a; stroke-width: 4;}
.reserve-wood {fill: #a9d396; opacity: 0.75;}
.hill {fill: #cdebb0; stroke: #a1d391; stroke-width: 4;}
.pale-edge {fill: none; stroke: #c4dfbd; stroke-width: 4;}
.water {fill: #9acbe0;}
.pool {fill: #7adcb9;}
.building {fill: #d6c9bf;}
.dirt {fill: #f3dcb5;}
.circus {fill: #c3f0c4; stroke: #fff; stroke-width: 6;}
.peak {fill: #d0834d;}
.track, .red-track, .water-line, .rail, .power, .lane, .river, .river-line, .boundary, .cycle,
.minor-casing, .minor-fill, .main-casing, .main-fill, .trunk-casing, .trunk-fill {
    fill: none;
    stroke-linejoin: round;
}
.track {stroke: #bf9a4a; stroke-width: 1; stroke-dasharray: 6 3;}
.red-track {stroke: #f29584; stroke-width: 1; stroke-dasharray: 1 3;}
.water-line {stroke: #94c9e0; stroke-width: 2;}
.rail {stroke: #929292; stroke-width: 2;}
.power {stroke: #a5a4a1; stroke-width: 1;}
.lane {stroke: #d3d0cb; stroke-width: 2;}
.river {stroke: #98cbe0; stroke-width: 11;}
.river-line {stroke: #9a7aa8; stroke-width: 1; stroke-dasharray: 8 3 2 3;}
.minor-casing {stroke: #cfccc8; stroke-width: 4;}
.minor-fill {stroke: #fff; stroke-width: 3;}
.main-casing {stroke: #b4b862; stroke-width: 7;}
.main-fill {stroke: #f6fabf; stroke-width: 5;}
.trunk-casing {stroke: #c99b62; stroke-width: 12;}
.trunk-fill {stroke: #fbcf9c; stroke-width: 10;}
.boundary {stroke: #a98bb0; stroke-width: 2; stroke-dasharray: 9 3 2 3;}
.cycle {stroke: #4a4aec; stroke-width: 1; stroke-dasharray: 2 3;}

.labels {
    font-family: "Noto Sans", sans-serif;
    text-anchor: middle;
    paint-order: stroke;
    stroke-linejoin: round;
}
.labels path {fill: none; stroke: none;}
.forest {fill: #46604a; font-size: 15px; font-style: italic;}
.peak-label {fill: #8d5c40; stroke: rgba(255, 255, 255, 0.5); stroke-width: 2; font-size: 12px;}
.place {fill: #7b7b7b; stroke: #fff; stroke-width: 2; font-size: 17px;}
.nature {fill: #678c50; stroke: #e4f3d6; stroke-width: 2; font-size: 14px; font-style: italic;}
.road, .district, .river-label {text-anchor: start; font-size: 11px;}
.road {fill: #26261c; stroke: #f6fabf; stroke-width: 1;}
.district {fill: #8c6a96; stroke: #f4eef4; stroke-width: 1;}
.river-label {fill: #4c8bc0; font-size: 13px; font-style: italic;}

.zoom-control {
    position: absolute;
    top: 12px;
    left: 12px;
    width: 38px;
    border: 2px solid rgba(0, 0, 0, 0.3);
    border-radius: 5px;
    background: #fff;
    background-clip: padding-box;
}
.zoom-control button {
    display: block;
    width: 34px;
    height: 35px;
    color: #000;
    font-size: 26px;
    font-weight: 600;
    line-height: 34px;
}
.zoom-control button:first-child {
    border-bottom: 1px solid #ccc;
}
.legend {
    position: absolute;
    left: 46px;
    bottom: 46px;
    width: 421px;
    padding: 11px 6px 7px 12px;
    border: 2px solid #7e7e7e;
    border-radius: 9px;
    background: #fff;
    color: #000;
    font-size: 16px;
    line-height: 20px;
}
.key {
    display: inline-block;
    width: 14px;
    height: 14px;
    border-radius: 50%;
    vertical-align: -2px;
}
.red-dot {background: #f00;}
.blue-dot {background: #00f;}
.black-dot {background: #000;}
.both {
    width: 16px;
    height: 16px;
    border: 1px solid #000;
    border-radius: 0;
    background: linear-gradient(90deg, #f00 50%, #00f 50%);
    vertical-align: -4px;
}
.warm, .cool {
    width: 13px;
    height: 13px;
    border-radius: 2px;
}
.warm {background: #f59e0b;}
.cool {background: #2563eb;}

/* Pagination */
.pager {
    display: flex;
    align-items: center;
    gap: 16px;
    margin: 64px 32px 0 32px;
}
.round {
    display: flex;
    align-items: center;
    justify-content: center;
    width: 48px;
    height: 48px;
    border-radius: 50%;
    background: #292d35;
    color: #d6d6d8;
}
.round svg {
    width: 30px;
    height: 30px;
}
.prev {
    background: #182027;
    color: #44494d;
}
.prev svg {transform: rotate(90deg);}
.next svg {transform: rotate(-90deg);}
.dots {
    display: flex;
    align-items: center;
    justify-content: center;
    gap: 16px;
    width: 152px;
    height: 48px;
    border-radius: 24px;
    background: #292d35;
}
.dot {
    width: 16px;
    height: 16px;
    border-radius: 50%;
    background: #505459;
}
.dot.current {
    background: #cbcbcd;
}
.page-count {
    margin-left: auto;
    color: #c8cacb;
    font-size: 22px;
}
```
